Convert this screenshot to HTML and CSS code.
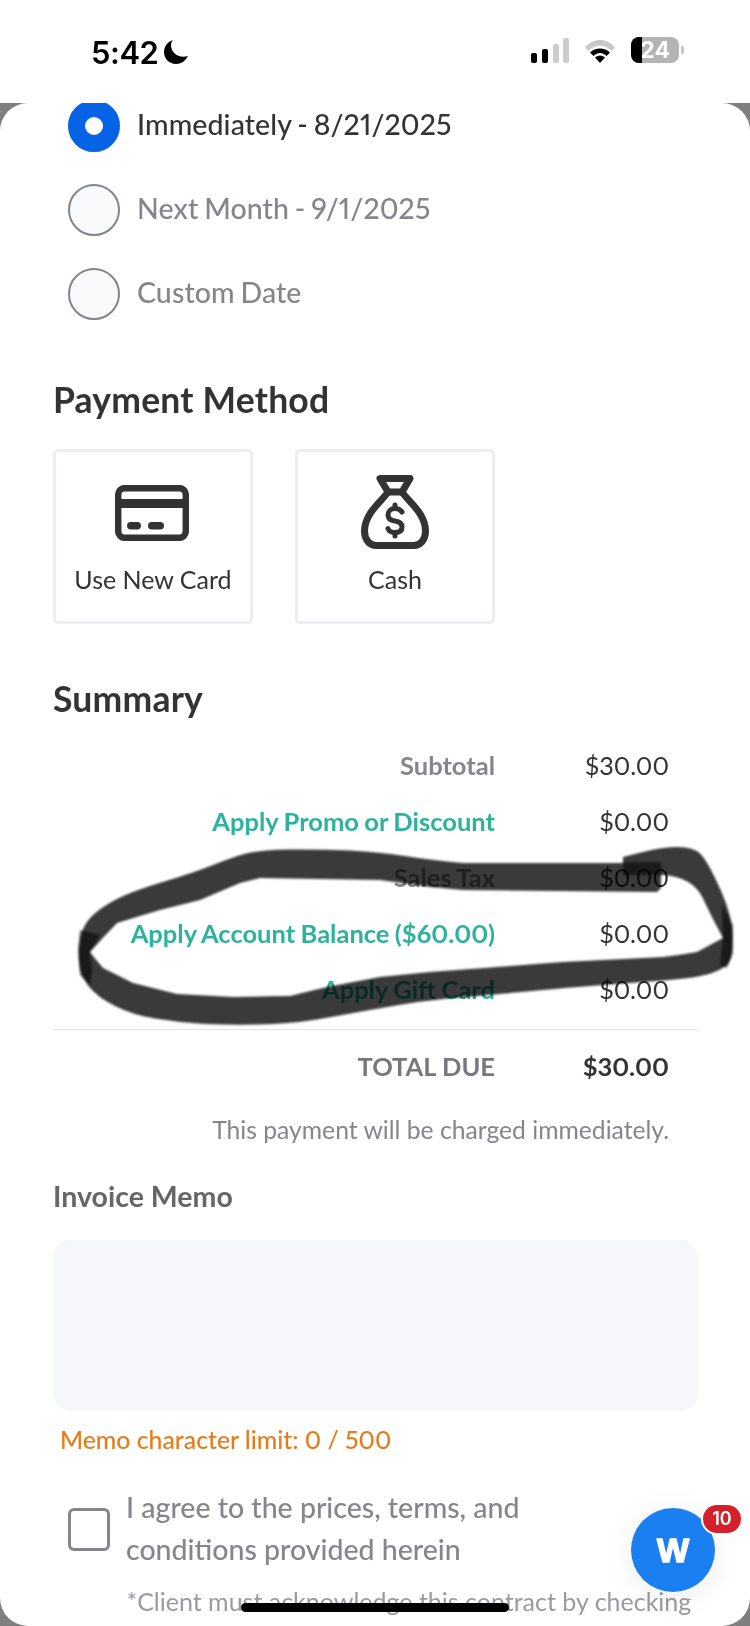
FILE: index.html
```html
<!DOCTYPE html>
<html lang="en">
<head>
<meta charset="utf-8">
<title>Payment</title>
<link rel="stylesheet" href="styles.css">
</head>
<body>
<div class="status">
  <div class="time">5:42
    <svg class="moon" viewBox="0 0 26 26"><path d="M10 1C4 3 1 8 1 13c0 7 5.500 12 12 12 5 0 9.500-3 12-8-1.500.6-3 .8-4.500.8C13 17.800 8 12.500 8 6c0-1.800.7-3.500 2-5z"/></svg>
  </div>
  <div class="status-icons">
    <svg class="signal" viewBox="0 0 38 25">
      <rect x="0" y="15" width="6" height="10" rx="2" fill="#000"/>
      <rect x="11" y="11" width="6" height="14" rx="2" fill="#000"/>
      <rect x="22" y="6" width="6" height="19" rx="2" fill="#ccc"/>
      <rect x="32" y="0" width="6" height="25" rx="2" fill="#ccc"/>
    </svg>
    <svg class="wifi" viewBox="0 0 34 25">
      <path d="M2 9.500C10-.5 24-.5 32 9.500l-3.500 3.500C22 6 12 6 5.500 13z" fill="#c8c8c8"/>
      <path d="M7 14.500C12.500 9 21.500 9 27 14.500l-3.500 3.500C19.500 14 14.500 14 10.500 18z" fill="#000"/>
      <path d="M12 19.500c3-2.800 7-2.800 10 0L17 25z" fill="#000"/>
    </svg>
    <div class="battery">
      <div class="battery-body"><span class="battery-fill"></span><span class="battery-num">24</span></div>
      <span class="battery-nub"></span>
    </div>
  </div>
</div>

<main class="sheet">
  <div class="content">
    <div class="radio-row">
      <span class="radio radio-on"></span><span class="radio-label label-on">Immediately - 8/21/2025</span>
    </div>
    <div class="radio-row">
      <span class="radio"></span><span class="radio-label">Next Month - 9/1/2025</span>
    </div>
    <div class="radio-row">
      <span class="radio"></span><span class="radio-label">Custom Date</span>
    </div>

    <h2 class="heading heading-pay">Payment Method</h2>
    <div class="cards">
      <div class="card">
        <svg class="icon-card" viewBox="0 0 74 56">
          <rect x="3.200" y="3.200" width="67.600" height="49.600" rx="6.500" fill="none" stroke="#333" stroke-width="6.500"/>
          <rect x="3" y="14" width="68" height="9" fill="#333"/>
          <rect x="12" y="37" width="14" height="7.500" rx="3.700" fill="#333"/>
          <rect x="33" y="37" width="16" height="7.500" rx="3.700" fill="#333"/>
        </svg>
        <span class="card-label">Use New Card</span>
      </div>
      <div class="card">
        <svg class="icon-bag" viewBox="0 0 68 74">
          <g fill="none" stroke="#333" stroke-width="7" stroke-linejoin="round" stroke-linecap="round">
            <path d="M19 3.500H49L41 17H27z"/>
            <path d="M27 17C22 25 3.500 38 3.500 56c0 9 5.500 14.500 11.500 14.500H53c6 0 11.500-5.500 11.500-14.500C64.500 38 46 25 41 17"/>
          </g>
          <g fill="none" stroke="#333" stroke-width="5" stroke-linecap="round">
            <path d="M41 37c-2-3-5-3.500-7-3.500-4 0-7 2.500-7 6.500s3 5.500 7 6c4 .5 7 2 7 6s-3 5.500-7 5.500c-3 0-6-1-7-4"/>
            <path d="M34 30v3M34 58v3"/>
          </g>
        </svg>
        <span class="card-label">Cash</span>
      </div>
    </div>

    <h2 class="heading heading-sum">Summary</h2>
    <div class="rows">
      <div class="row"><span class="row-label">Subtotal</span><span class="row-value">$30.00</span></div>
      <div class="row"><span class="row-label link">Apply Promo or Discount</span><span class="row-value">$0.00</span></div>
      <div class="row"><span class="row-label">Sales Tax</span><span class="row-value">$0.00</span></div>
      <div class="row"><span class="row-label link">Apply Account Balance ($60.00)</span><span class="row-value">$0.00</span></div>
      <div class="row"><span class="row-label link">Apply Gift Card</span><span class="row-value">$0.00</span></div>
    </div>
    <div class="total">
      <span class="total-label">TOTAL DUE</span><span class="total-value">$30.00</span>
    </div>
    <p class="note">This payment will be charged immediately.</p>

    <h3 class="memo-title">Invoice Memo</h3>
    <div class="memo-box"></div>
    <p class="memo-limit">Memo character limit: 0 / 500</p>

    <div class="agree">
      <span class="checkbox"></span>
      <p class="agree-text">I agree to the prices, terms, and<br>conditions provided herein</p>
    </div>
    <p class="fine">*Client must acknowledge this contract by checking</p>
  </div>
</main>

<svg class="ink" viewBox="0 0 750 1626">
  <g class="ink-group">
    <path class="ink-main" d="M661 863H463Q430 860 405 856Q380 852 350 850.500Q320 849 290 849.500Q260 850 246 853.500Q233 857 213 865Q193 873 161 882.500Q130 892 115 900Q100 908 91.500 916.500Q83 925 80.500 937.500Q78 950 79 962.500Q80 975 88.500 986Q97 997 115 1006Q133 1015 155 1018.500Q177 1022 198.500 1023.500Q220 1025 255 1024.500Q290 1024 316.500 1019.500Q343 1015 361.500 1011.500Q380 1008 405 1004Q430 1000 460 997.500Q490 995 526.500 991.500Q563 988 596.500 985.500Q630 983 663.500 980.500Q697 978 712 973Q727 968 730 960.500Q733 953 732.500 934Q732 915 719.500 887.500Q707 860 700 853.500Q693 847 678 847Q663 847 643 852L623 857V875H663Q693 877 703 898.500Q713 920 723 938Q710 945 697 952Q680 955 663 957Q613 959.500 563 962Q496 967 430 972Q405 974.500 380 977Q353 982 327 987Q308 991.500 290 996Q261 996.500 233 997Q205 995.500 177 994Q155 988.500 133 983Q118 975.500 103 968Q96 960 90 952Q103 937.500 117 923Q138 916.500 160 910Q180 905 200 900Q220 891.500 240 883Q250 880.500 260 878Q290 878.500 320 879Q350 879.500 380 880Q405 883.500 430 887Q446 888.500 463 890L657 892L661 888Z"/>
    <path class="ink-dark" d="M623 862H661V875H623Z"/>
    <path class="ink-dark" d="M80 930L78 950L80 975L90 985L92 970L90 952L100 935Z"/>
    <path class="ink-dark" d="M722 905L733 925V953L727 968L720 965L723 938Z"/>
  </g>
</svg>

<div class="fab">
  <span class="fab-w">W</span>
  <span class="fab-badge">10</span>
</div>
<div class="home"></div>
</body>
</html>
```
FILE: styles.css
```css
* { box-sizing: border-box; }
html, body { margin: 0; padding: 0; }
body {
  position: relative;
  width: 750px;
  height: 1626px;
  overflow: hidden;
  background: #7f7f7f;
  font-family: "Lato", "Liberation Sans", sans-serif;
  font-variant-numeric: proportional-nums;
  color: #333;
}
.status {
  height: 103px;
  background: #fff;
  display: flex;
  justify-content: space-between;
  padding: 37px 66px 0 91px;
}
.time {
  display: flex;
  align-items: center;
  gap: 5px;
  height: 30px;
  font-family: "Inter", sans-serif;
  font-size: 31px;
  font-weight: 600;
  color: #000;
  letter-spacing: -0.5px;
}
.moon { width: 26px; height: 26px; fill: #000; }
.status-icons { display: flex; gap: 14px; align-items: flex-start; }
.signal { width: 38px; height: 25px; margin-top: 1px; }
.wifi { width: 34px; height: 25px; margin-top: 1px; }
.battery { display: flex; align-items: center; gap: 2px; height: 26px; }
.battery-body {
  position: relative;
  width: 48px;
  height: 26px;
  border-radius: 8px;
  overflow: hidden;
  background: #b4b4b4;
  display: flex;
  justify-content: flex-end;
  align-items: center;
  padding-right: 9px;
}
.battery-fill { position: absolute; left: 0; top: 0; bottom: 0; width: 11px; background: #000; }
.battery-num { font-family: "Inter", sans-serif; font-size: 23px; font-weight: 700; color: #fff; }
.battery-nub { width: 3px; height: 8px; background: #c4c4c4; border-radius: 0 2px 2px 0; }

.sheet {
  height: 1523px;
  background: #fff;
  border-radius: 28px;
  overflow: hidden;
}
.content { margin-top: -3px; padding: 0 52px 0 53px; }

.radio-row { display: flex; align-items: center; height: 84px; padding-left: 15px; gap: 17px; }
.radio-row:first-child { margin-top: -19.500px; }
.radio {
  width: 52px;
  height: 52px;
  border-radius: 50%;
  border: 2px solid #84848c;
  background: #f8fafc;
  flex: none;
}
.radio-on { border: 17px solid #0763e5; background: #fff; }
.radio-label { font-size: 28.500px; font-weight: 500; color: #85858d; padding-bottom: 4px; word-spacing: -1.500px; letter-spacing: 0.1px; }
.label-on { color: #333; }

.heading { margin: 0; font-size: 35.500px; font-weight: 700; color: #333; line-height: 40px; letter-spacing: 0.2px; }
.heading-pay { margin-top: 44px; }
.cards { display: flex; gap: 42px; margin-top: 29px; }
.card {
  width: 200px;
  height: 175px;
  border: 3.500px solid #eceef4;
  border-radius: 5px;
  display: flex;
  flex-direction: column;
  align-items: center;
  position: relative;
}
.icon-card { width: 74px; height: 56px; margin: 33px 3px 0 0; }
.icon-bag { width: 68px; height: 74px; margin-top: 23px; }
.card-label { position: absolute; left: 0; right: 0; top: 112px; text-align: center; font-size: 25px; line-height: 30px; color: #333; }

.heading-sum { margin-top: 55px; }
.rows { margin-top: 19px; }
.row { display: flex; height: 56px; align-items: center; }
.row-label { width: 442px; padding-bottom: 2px; text-align: right; font-size: 25.500px; font-weight: 700; color: #85858d; white-space: nowrap; word-spacing: -0.800px; }
.link { color: #2db29c; }
.row-value { width: 174px; padding-bottom: 2px; text-align: right; font-size: 25.200px; font-weight: 400; color: #333; }
.total {
  display: flex;
  align-items: center;
  height: 76px;
  margin-top: 11px;
  border-top: 1px solid #e3e3e6;
}
.total-label { width: 442px; padding-bottom: 2px; text-align: right; font-size: 25.500px; font-weight: 700; color: #77777f; }
.total-value { width: 174px; padding-bottom: 2px; text-align: right; font-size: 25.500px; font-weight: 700; color: #333; }
.note { margin: 10px 0 0; width: 616px; text-align: right; font-size: 24.700px; line-height: 30px; color: #85858d; }

.memo-title { margin: 33px 0 0; font-size: 28.500px; font-weight: 700; line-height: 36px; color: #666; }
.memo-box { height: 171px; margin-top: 26px; background: #f5f7fa; border-radius: 18px; }
.memo-limit { margin: 14px 0 0 7px; font-size: 24.800px; font-weight: 500; line-height: 30px; color: #e67c19; }

.agree { display: flex; align-items: center; margin-top: 31px; padding-left: 15px; gap: 16px; }
.checkbox { width: 42px; height: 43px; margin-top: 4px; border: 3.500px solid #85858d; border-radius: 6px; flex: none; }
.agree-text { margin: 0; font-size: 28.500px; font-weight: 500; line-height: 42px; color: #85858d; }
.fine { margin: 15px 0 0 73.500px; font-size: 25px; line-height: 32px; white-space: nowrap; color: #9a9aa0; }

.ink { position: absolute; left: 0; top: 0; width: 750px; height: 1626px; pointer-events: none; mix-blend-mode: multiply; }
.ink-group { filter: blur(1.200px); }
.ink-main { fill: #3a3a3a; }
.ink-dark { fill: #000; opacity: 0.55; }

.fab {
  position: absolute;
  left: 631px;
  top: 1508px;
  width: 84px;
  height: 84px;
  border-radius: 50%;
  background: #1a7ff0;
  display: flex;
  align-items: center;
  justify-content: center;
  box-shadow: 0 4px 30px rgba(0, 0, 0, 0.08);
}
.fab-w { font-family: "Liberation Sans", sans-serif; font-size: 34px; font-weight: 700; color: #fff; -webkit-text-stroke: 1.500px #fff; }
.fab-badge {
  position: absolute;
  left: 72px;
  top: -3px;
  width: 38px;
  height: 28px;
  border-radius: 14px;
  background: #d4202a;
  color: #fff;
  font-family: "Inter", sans-serif;
  font-size: 18px;
  font-weight: 600;
  text-align: center;
  line-height: 28px;
  box-shadow: 0 0 0 2px #fff;
}
.home {
  position: absolute;
  left: 241px;
  top: 1603px;
  width: 268px;
  height: 9px;
  border-radius: 5px;
  background: #000;
}
```
